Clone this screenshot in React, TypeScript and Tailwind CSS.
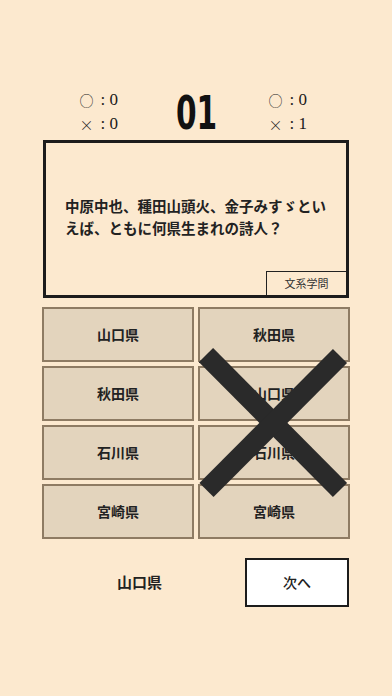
const jp = { fontFamily: '"Noto Sans CJK JP", "Noto Sans", sans-serif' };
const serif = { fontFamily: '"Liberation Serif", "Noto Sans CJK JP", serif' };

const choices = ["山口県", "秋田県", "秋田県", "山口県", "石川県", "石川県", "宮崎県", "宮崎県"];

function Score({ ok, ng }: { ok: number; ng: number }) {
  return (
    <div className="flex flex-col w-[44px] text-[17px] leading-[24px] text-[#1a1a1a]" style={serif}>
      <div className="flex items-center gap-[7px]">
        <span style={jp} className="text-[14px] font-light">○</span>
        <span>:&nbsp;{ok}</span>
      </div>
      <div className="flex items-center gap-[7px]">
        <span style={jp} className="text-[14px] font-light">×</span>
        <span>:&nbsp;{ng}</span>
      </div>
    </div>
  );
}

export default function App() {
  return (
    <div className="relative w-[392px] h-[696px] bg-[#fce9cf] overflow-hidden" style={jp}>
      <div className="flex justify-center items-center gap-[55px] pt-[88px] h-[136px]">
        <Score ok={0} ng={0} />
        <div
          className="text-[47px] leading-none font-bold text-[#111] scale-x-[0.7] w-[35px] flex justify-center"
          style={{ fontFamily: '"Liberation Sans Narrow", "DejaVu Sans Condensed", sans-serif' }}
        >
          01
        </div>
        <Score ok={0} ng={1} />
      </div>

      <div className="mt-[4px] ml-[43px] w-[306px] h-[158px] border-[3px] border-[#1c1c1c] flex flex-col">
        <p className="mt-[52px] ml-[19px] w-[268px] text-[14.5px] leading-[22px] font-bold text-[#222]">
          中原中也、種田山頭火、金子みすゞといえば、ともに何県生まれの詩人？
        </p>
        <div className="mt-auto flex justify-end">
          <div className="w-[80px] h-[24px] border-t border-l border-[#222] flex items-center justify-center text-[11px] text-[#333]">
            文系学問
          </div>
        </div>
      </div>

      <div className="mt-[9px] mx-[42px] grid grid-cols-2 gap-[4px]">
        {choices.map((c, i) => (
          <div
            key={i}
            className="h-[55px] border-2 border-[#8e7b63] bg-[#e3d4bd] flex items-center justify-center text-[14px] font-bold text-[#222]"
          >
            {c}
          </div>
        ))}
      </div>

      <div className="mt-[19px] ml-[42px] w-[307px] flex items-center">
        <div className="flex-1 pr-[8px] flex justify-center text-[15px] font-bold text-[#222]">山口県</div>
        <button className="w-[104px] h-[49px] border-2 border-[#1c1c1c] bg-white text-[14px] font-medium text-[#222]">
          次へ
        </button>
      </div>

      <svg className="absolute left-[199px] top-[348px]" width="150" height="150" viewBox="0 0 150 150">
        <line x1="7" y1="7" x2="141" y2="142" stroke="#2a2a2a" strokeWidth="20" />
        <line x1="141" y1="8" x2="7.5" y2="142" stroke="#2a2a2a" strokeWidth="20" />
      </svg>
    </div>
  );
}
